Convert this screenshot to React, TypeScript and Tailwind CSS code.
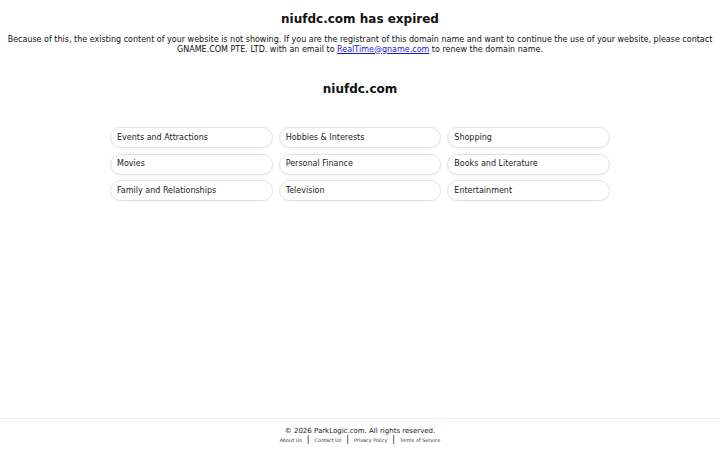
import React from 'react';

const categories = [
  'Events and Attractions',
  'Hobbies & Interests',
  'Shopping',
  'Movies',
  'Personal Finance',
  'Books and Literature',
  'Family and Relationships',
  'Television',
  'Entertainment',
];

const footerLinks = ['About Us', 'Contact Us', 'Privacy Policy', 'Terms of Service'];

export default function App() {
  return (
    <div className="min-h-[450px] flex flex-col bg-white text-[#111] font-['DejaVu_Sans',sans-serif]">
      <main className="flex-1 flex flex-col items-center">
        {/* Expiry notice */}
        <h1 className="mt-[10px] text-[12px] leading-[18px] font-bold text-[#111]">niufdc.com has expired</h1>
        <p className="mt-[7px] px-[2px] text-center text-[8px] leading-[9.5px] text-[#111]">
          Because of this, the existing content of your website is not showing. If you are the registrant of this
          domain name and want to continue the use of your website, please contact GNAME.COM PTE. LTD. with an email
          to{' '}
          <a href="#" className="text-[#1a1ad6] underline">
            RealTime@gname.com
          </a>{' '}
          to renew the domain name.
        </p>

        <h2 className="mt-[26px] text-[12px] leading-[18px] font-bold text-[#111]">niufdc.com</h2>

        {/* Related searches */}
        <div className="mt-[29px] w-[500px] grid grid-cols-3 gap-x-[6px] gap-y-[5.5px]">
          {categories.map((c) => (
            <a
              key={c}
              href="#"
              className="h-[21px] flex items-center pl-[6px] rounded-full border border-[#e2e2e2] shadow-[0_1px_2px_rgba(0,0,0,0.04)] text-[8px] text-[#222]"
            >
              {c}
            </a>
          ))}
        </div>
      </main>

      <footer className="border-t border-[#eeeeee] pt-[7px] pb-[6px] flex flex-col items-center">
        <div className="text-[7px] leading-[10px] text-[#222]">© 2026 ParkLogic.com. All rights reserved.</div>
        <div className="flex items-center text-[4.9px] leading-[8px] text-[#333]">
          {footerLinks.map((l, i) => (
            <React.Fragment key={l}>
              {i > 0 && <span className="mx-[5px] text-[8px] text-[#111]">|</span>}
              <a href="#">{l}</a>
            </React.Fragment>
          ))}
        </div>
      </footer>
    </div>
  );
}
